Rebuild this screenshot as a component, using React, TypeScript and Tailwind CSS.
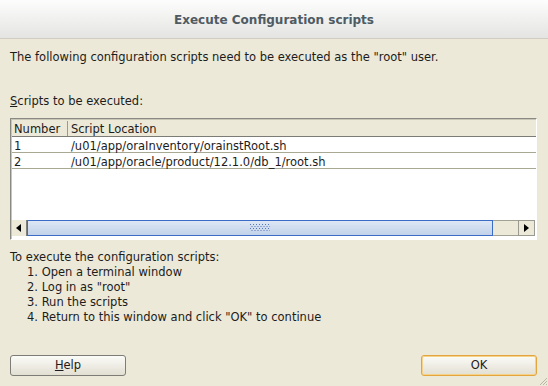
export default function App() {
  const rows = [
    { n: "1", path: "/u01/app/oraInventory/orainstRoot.sh" },
    { n: "2", path: "/u01/app/oracle/product/12.1.0/db_1/root.sh" },
  ];
  const steps = [
    'Open a terminal window',
    'Log in as "root"',
    'Run the scripts',
    'Return to this window and click "OK" to continue',
  ];

  return (
    <div
      className="relative w-[548px] h-[386px] flex flex-col overflow-hidden bg-[#ece9d8] text-[#1c1c1c]"
      style={{ fontFamily: '"DejaVu Sans", Verdana, sans-serif' }}
    >
      {/* Title bar */}
      <div className="h-[39px] shrink-0 flex items-center justify-center bg-gradient-to-b from-[#fdfdfd] to-[#e4e4e2] border-b border-[#cfcdc4]">
        <span className="text-[12px] font-bold text-[#4f5b63] pt-[2px]">Execute Configuration scripts</span>
      </div>

      <div className="flex-1 flex flex-col px-[10px] text-[11.5px]">
        <p className="mt-[11px] leading-[14px]">
          The following configuration scripts need to be executed as the "root" user.
        </p>

        <p className="mt-[30px] leading-[14px]">
          <span className="underline">S</span>cripts to be executed:
        </p>

        {/* Table */}
        <div className="mt-[10px] w-[527px] h-[122px] border-t border-l border-[#8a8a84] border-r border-b border-r-white border-b-white flex flex-col">
          <div className="flex-1 flex flex-col bg-white border-t border-l border-[#c9c6b8]">
            <div className="h-[17px] flex bg-[#ece9d8] border-b border-[#7c7c76] leading-[16px] pt-[1px]">
              <div className="w-[56px] pl-[2px] border-r border-[#9c9a90]">Number</div>
              <div className="flex-1 pl-[3px]">Script Location</div>
            </div>
            {rows.map((r) => (
              <div key={r.n} className="h-[16px] flex border-b border-[#a9a893] leading-[14px] pt-[2px]">
                <div className="w-[56px] pl-[2px]">{r.n}</div>
                <div className="flex-1 pl-[3px]">{r.path}</div>
              </div>
            ))}
            <div className="flex-1" />

            {/* Horizontal scrollbar */}
            <div className="h-[16px] flex mb-[3px] mr-[1px]">
              <div className="w-[15px] flex items-center justify-center bg-[#ece9d8] border-r border-[#7f7f7f]">
                <svg width="5" height="8" viewBox="0 0 5 8">
                  <path d="M5 0 L0 4 L5 8 Z" fill="#000" />
                </svg>
              </div>
              <div className="w-[467px] flex items-center justify-center bg-gradient-to-b from-[#dde7f5] to-[#c2d2e9] border border-[#3a6cc6]">
                <svg width="20" height="8" viewBox="0 0 20 8">
                  {[0, 1, 2, 3].map((r) =>
                    [0, 1, 2, 3, 4, 5, 6].map((c) => (
                      <rect key={`${r}-${c}`} x={c * 3 + (r % 2) * 1.5} y={r * 2} width="1" height="1" fill="#5676b8" />
                    ))
                  )}
                </svg>
              </div>
              <div className="w-[25px] bg-[#ece9d8] border-t border-b border-[#a2a196]" />
              <div className="w-[17px] flex items-center justify-center bg-[#ece9d8] border border-[#9a9a92]">
                <svg width="5" height="8" viewBox="0 0 5 8">
                  <path d="M0 0 L5 4 L0 8 Z" fill="#000" />
                </svg>
              </div>
            </div>
          </div>
        </div>

        {/* Instructions */}
        <div className="mt-[10px] leading-[15px]">
          <p>To execute the configuration scripts:</p>
          <ol className="pl-[17px]">
            {steps.map((s, i) => (
              <li key={i}>
                {i + 1}. {s}
              </li>
            ))}
          </ol>
        </div>

        {/* Buttons */}
        <div className="mt-[30px] flex justify-between items-center pr-[1px]">
          <button className="w-[116px] h-[21px] rounded-[3px] border border-[#7d7c76] bg-gradient-to-b from-[#fbfbf8] to-[#e2dfd2] text-[11.5px] leading-none">
            <span className="underline">H</span>elp
          </button>
          <button className="w-[116px] h-[21px] rounded-[3px] border border-[#e3a63c] bg-gradient-to-b from-[#fbfbf8] to-[#e2dfd2] text-[11.5px] leading-none shadow-[inset_0_0_0_1px_#f6d18a]">
            OK
          </button>
        </div>
      </div>

      {/* Resize grip */}
      <svg className="absolute right-0 bottom-0" width="10" height="10" viewBox="0 0 10 10">
        <path d="M9 2 L2 9 M9 5 L5 9 M9 8 L8 9" stroke="#b9b7aa" strokeWidth="1" />
      </svg>
    </div>
  );
}
